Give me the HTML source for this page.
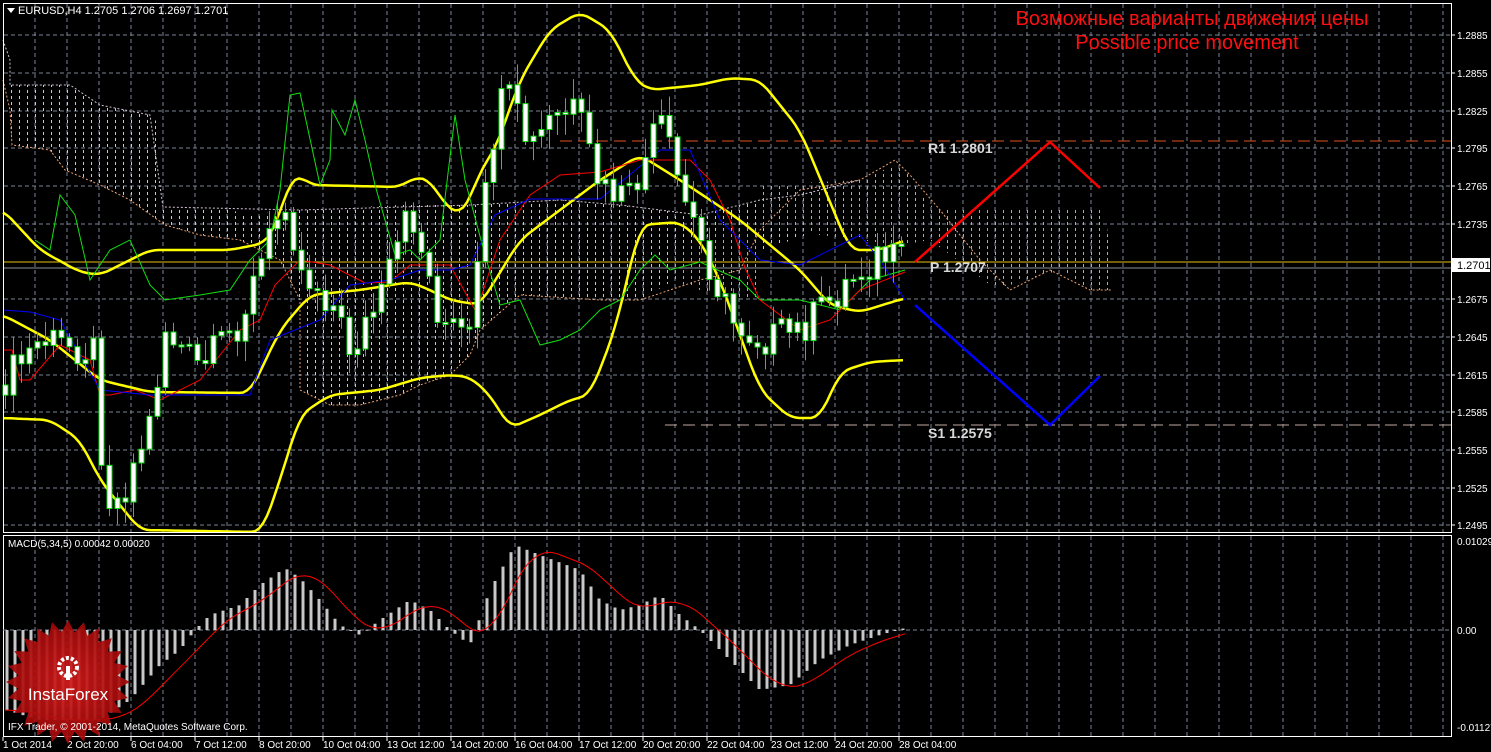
<!DOCTYPE html>
<html><head><meta charset="utf-8"><style>
html,body{margin:0;padding:0;background:#000;width:1491px;height:752px;overflow:hidden}
svg{display:block}
text{font-family:"Liberation Sans",sans-serif}
</style></head><body>
<svg id="s" width="1491" height="752" xmlns="http://www.w3.org/2000/svg">
<defs>
<pattern id="cloud" width="8" height="6" patternUnits="userSpaceOnUse">
<rect x="3" y="0" width="1" height="3" fill="#d0c8d0"/>
</pattern>
<pattern id="cloud2" width="8" height="6" patternUnits="userSpaceOnUse">
<rect x="3" y="0" width="1" height="3" fill="#e0a070"/>
</pattern>
<radialGradient id="lg" cx="50%" cy="50%" r="50%"><stop offset="0" stop-color="#d21a1a"/><stop offset="1" stop-color="#a00808"/></radialGradient>
</defs>
<rect width="1491" height="752" fill="#000"/>
<g id="grid" stroke="#7a8494" stroke-dasharray="4,3" stroke-width="1"></g>
<polygon fill="url(#cloud)" points="10,85 70,85 100,105 150,115 160,125 163,207 230,207 240,215 300,210 400,205 470,205 560,200 620,205 700,215 760,200 800,195 820,230 750,255 700,265 640,300 600,300 520,295 480,330 470,355 450,375 420,385 400,395 360,405 330,405 300,390 300,300 280,260 240,240 200,235 165,225 130,200 100,185 65,170 50,150 12,145"/>
<polygon fill="url(#cloud2)" points="760,185 860,180 895,165 910,175 930,205 940,210 1105,210 1112,270 1112,290 1090,290 1060,270 1010,285 990,285 960,262 930,240 900,245 860,240 820,235 760,225"/>
<polygon fill="url(#cloud2)" points="670,250 700,245 720,230 760,225 760,300 730,300 700,290 670,280"/>
<polyline fill="none" stroke="#e8a070" stroke-dasharray="2,2" points="3,80 10,110 12,145 50,150 65,170 100,185 130,200 165,225 200,235 240,240 280,260 300,300 300,390 330,405 360,405 400,395 420,385 450,375 470,355 480,330 520,295 600,300 640,300 700,280 740,270 760,230 800,190 860,180 895,160 910,175 940,210 980,260 1010,290 1050,270 1090,290 1112,290"/>
<polyline fill="none" stroke="#d0c0d0" stroke-dasharray="2,2" points="3,40 10,60 10,85 70,85 100,105 150,115 163,207 300,210 470,205 560,200 620,205 700,215 760,200 800,195 860,180"/>
<line x1="3" y1="262" x2="1451" y2="262" stroke="#e8c010"/>
<line x1="3" y1="268" x2="1451" y2="268" stroke="#8a909a"/>
<line x1="560" y1="141" x2="1451" y2="141" stroke="#e05020" stroke-dasharray="12,6"/>
<line x1="665" y1="425" x2="1451" y2="425" stroke="#c0a8a0" stroke-dasharray="12,6"/>
<g id="ind"></g>
<g id="candles"></g>
<polyline fill="none" stroke="#ff0000" stroke-width="2.5" points="915,262 1050,142 1100,188"/>
<polyline fill="none" stroke="#0000ff" stroke-width="2.5" points="915,305 1050,425 1100,376"/>
<g font-family="Liberation Mono,monospace" font-weight="bold" font-size="14" fill="#d8d8d8">
<text x="928" y="153">R1 1.2801</text><text x="930" y="272">P 1.2707</text><text x="928" y="438">S1 1.2575</text></g>
<text x="1192" y="25" font-size="20" fill="#ff1010" text-anchor="middle">Возможные варианты движения цены</text>
<text x="1187" y="49" font-size="20" fill="#ff1010" text-anchor="middle">Possible price movement</text>
<path d="M7,8 L15,8 L11,13Z" fill="#fff"/>
<text x="18" y="14" font-size="11" fill="#fff">EURUSD,H4  1.2705 1.2706 1.2697 1.2701</text>
<rect x="3.5" y="3.5" width="1448" height="529" fill="none" stroke="#fff"/>
<rect x="3.5" y="535.5" width="1448" height="201" fill="none" stroke="#fff"/>
<line x1="3" y1="630" x2="1451" y2="630" stroke="#7a8494" stroke-dasharray="4,3"/>
<g id="macd"></g>
<text x="8" y="547" font-size="10" fill="#fff">MACD(5,34,5) 0.00042 0.00020</text>
<g id="axis" font-size="10" fill="#fff"></g>
<rect x="1452" y="258" width="38" height="14" fill="#fff"/>
<text x="1457" y="269" font-size="11" fill="#000">1.2701</text>
<g transform="translate(68,682)">
<polygon id="star" fill="url(#lg)" opacity="0.92"/>
<circle cx="0" cy="-15" r="9" fill="none" stroke="#fff" stroke-width="4" stroke-dasharray="3,2"/>
<rect x="-2" y="-16" width="4" height="14" fill="#fff"/>
<text x="0" y="18" font-size="17" fill="#fff" text-anchor="middle">InstaForex</text>
</g>
<text x="8" y="730" font-size="10" fill="#fff">IFX Trader, © 2001-2014, MetaQuotes Software Corp.</text>
</svg>
<script>
(function(){
var NS="http://www.w3.org/2000/svg";
function el(p,t,a){var e=document.createElementNS(NS,t);for(var k in a)e.setAttribute(k,String(a[k]));document.getElementById(p).appendChild(e);return e;}
var gx;
for(gx=35;gx<1451;gx+=32){el("grid","line",{x1:gx,y1:4,x2:gx,y2:532});el("grid","line",{x1:gx,y1:536,x2:gx,y2:736});}
var ly=[["1.2885",35],["1.2855",73],["1.2825",111],["1.2795",148],["1.2765",186],["1.2735",224],["1.2705",262],["1.2675",299],["1.2645",337],["1.2615",375],["1.2585",412],["1.2555",450],["1.2525",488],["1.2495",525]];
ly.forEach(function(l){el("grid","line",{x1:4,y1:l[1],x2:1451,y2:l[1]});el("axis","line",{x1:1451,y1:l[1],x2:1455,y2:l[1],stroke:"#fff"});var t=el("axis","text",{x:1457,y:l[1]+4});t.textContent=l[0];});
[["0.01029",545],["0.00",634],["-0.01127",731]].forEach(function(l){var t=el("axis","text",{x:1457,y:l[1]});t.textContent=l[0];});
var tl=["1 Oct 2014","2 Oct 20:00","6 Oct 04:00","7 Oct 12:00","8 Oct 20:00","10 Oct 04:00","13 Oct 12:00","14 Oct 20:00","16 Oct 04:00","17 Oct 12:00","20 Oct 20:00","22 Oct 04:00","23 Oct 12:00","24 Oct 20:00","28 Oct 04:00"];
tl.forEach(function(s,i){var x=3+i*64;el("axis","line",{x1:x,y1:737,x2:x,y2:741,stroke:"#fff"});var t=el("axis","text",{x:x,y:748});t.textContent=s;});
function interp(pts,x){for(var i=0;i<pts.length-1;i++){if(x>=pts[i][0]&&x<=pts[i+1][0]){var f=(x-pts[i][0])/(pts[i+1][0]-pts[i][0]);return pts[i][1]+f*(pts[i+1][1]-pts[i][1]);}}return pts[pts.length-1][1];}
function smooth(pts){var out=[];for(var x=pts[0][0];x<=pts[pts.length-1][0];x+=4){var s=0,n=0;for(var d=-8;d<=8;d+=4){s+=interp(pts,Math.min(Math.max(x+d,pts[0][0]),pts[pts.length-1][0]));n++;}out.push([x,(s/n).toFixed(1)]);}return out;}
function pl(pts,c,w,sm){var p=sm?smooth(pts):pts;el("ind","polyline",{points:p.map(function(q){return q.join(",")}).join(" "),fill:"none",stroke:c,"stroke-width":w});}
pl([[3,210],[40,250],[80,272],[100,275],[150,250],[230,250],[265,243],[275,228],[290,180],[300,175],[310,185],[400,187],[415,177],[430,180],[445,205],[460,215],[470,200],[480,170],[495,150],[520,80],[550,30],[580,12],[610,30],[635,80],[650,90],[700,85],[730,78],[760,80],[800,130],[825,190],[850,250],[880,250],[905,240]],"#ffff00",2.5,true);
pl([[3,418],[50,420],[80,440],[100,480],[140,530],[262,532],[280,480],[300,415],[330,395],[380,390],[420,378],[450,375],[470,377],[490,395],[510,428],[540,415],[570,400],[590,395],[615,330],[640,225],[680,222],[700,240],[720,280],[760,390],[790,418],[820,418],[840,372],[870,362],[905,360]],"#ffff00",2.5,true);
pl([[3,315],[50,340],[100,380],[150,392],[250,393],[280,330],[310,295],[360,290],[410,282],[430,290],[450,300],[480,305],[520,240],[560,210],[600,180],[640,155],[680,180],[740,220],[800,270],[830,305],[860,312],[905,298]],"#ffff00",2.5,true);
pl([[35,240],[50,250],[60,195],[75,215],[90,280],[110,250],[130,240],[150,285],[165,300],[200,295],[230,290],[250,260],[270,240],[280,190],[290,95],[300,93],[320,185],[330,160],[332,110],[345,135],[355,100],[365,140],[375,185],[395,255],[410,250],[420,260],[440,240],[455,115],[465,180],[485,255],[500,305],[520,300],[540,345],[560,340],[580,330],[600,310],[620,300],[640,270],[655,255],[670,270],[700,262],[740,280],[760,300],[800,300],[840,310],[870,280],[905,270]],"#10e010",1,false);
pl([[3,350],[12,350],[20,380],[30,380],[60,345],[90,360],[100,395],[110,395],[135,390],[160,400],[200,380],[240,330],[260,320],[275,285],[300,260],[330,265],[365,283],[390,282],[410,265],[450,265],[475,310],[480,300],[500,240],[530,195],[560,175],[600,172],[640,160],[660,160],[690,160],[710,180],[730,220],[745,268],[760,300],[800,330],[830,320],[860,290],[905,272]],"#ff0000",1,false);
pl([[3,310],[30,312],[60,320],[100,390],[150,395],[250,395],[270,340],[320,320],[350,285],[390,280],[420,270],[450,270],[470,265],[495,215],[530,199],[600,199],[660,150],[690,150],[720,220],[760,260],[800,265],[860,235],[880,260],[905,300]],"#0000ff",1,false);
var cp=[[5,380],[40,340],[95,350],[103,480],[110,500],[120,500],[150,420],[165,330],[200,370],[240,320],[285,195],[300,270],[330,300],[350,350],[380,300],[410,210],[440,320],[470,340],[490,150],[505,90],[530,150],[550,120],[575,110],[600,190],[630,200],[660,120],[680,190],[700,240],[730,320],[760,340],[800,330],[830,300],[860,270],[880,255],[905,265]];
var prev=385,i=0,cx,cl,op,bt,bb,n1,n2,n3;
for(cx=5;cx<=905;cx+=8){i++;n1=Math.sin(i*12.9898)*43758.5453;n1=n1-Math.floor(n1);n2=Math.sin(i*78.233)*12345.678;n2=n2-Math.floor(n2);n3=Math.sin(i*3.17)*999.9;n3=n3-Math.floor(n3);
cl=interp(cp,cx)+(n1-0.5)*36;op=prev;bt=Math.min(op,cl);bb=Math.max(op,cl);if(bb-bt<2)bb=bt+2;
el("candles","line",{x1:cx+0.5,y1:Math.max(6,bt-3-n2*18),x2:cx+0.5,y2:Math.min(530,bb+3+n3*18),stroke:"#10e010"});
el("candles","rect",{x:cx-2,y:bt,width:5,height:bb-bt,fill:"#fff",stroke:"#10e010","stroke-width":1});prev=cl;}
var mh=[[5,710],[40,720],[100,720],[130,700],[160,665],[180,650],[195,630],[210,615],[240,605],[260,585],[285,568],[300,578],[320,600],[340,625],[360,635],[380,620],[410,600],[430,610],[450,630],[470,645],[490,590],[515,545],[540,555],[580,570],[600,600],[620,610],[640,605],[660,595],[680,615],[700,630],[720,650],[740,670],[760,690],[790,685],[820,660],[850,645],[880,635],[905,628]];
var mx,y;
for(mx=7;mx<=905;mx+=8){y=interp(mh,mx);el("macd","rect",{x:mx-1.5,y:Math.min(y,630),width:3,height:Math.max(1,Math.abs(y-630)),fill:"#c8c8c8"});}
var sg=[];for(mx=5;mx<=905;mx+=6){var s=0;for(var d=0;d<=40;d+=5)s+=interp(mh,Math.max(5,mx-d));sg.push([mx,(s/9).toFixed(1)]);}
el("macd","polyline",{points:sg.map(function(p){return p.join(",")}).join(" "),fill:"none",stroke:"#ff0000","stroke-width":1});
var pts=[];for(var k=0;k<48;k++){var a=k*Math.PI/24,r=k%2?50:62;pts.push((r*Math.cos(a)).toFixed(1)+","+(r*Math.sin(a)).toFixed(1));}
document.getElementById("star").setAttribute("points",pts.join(" "));
})();
</script>
</body></html>
